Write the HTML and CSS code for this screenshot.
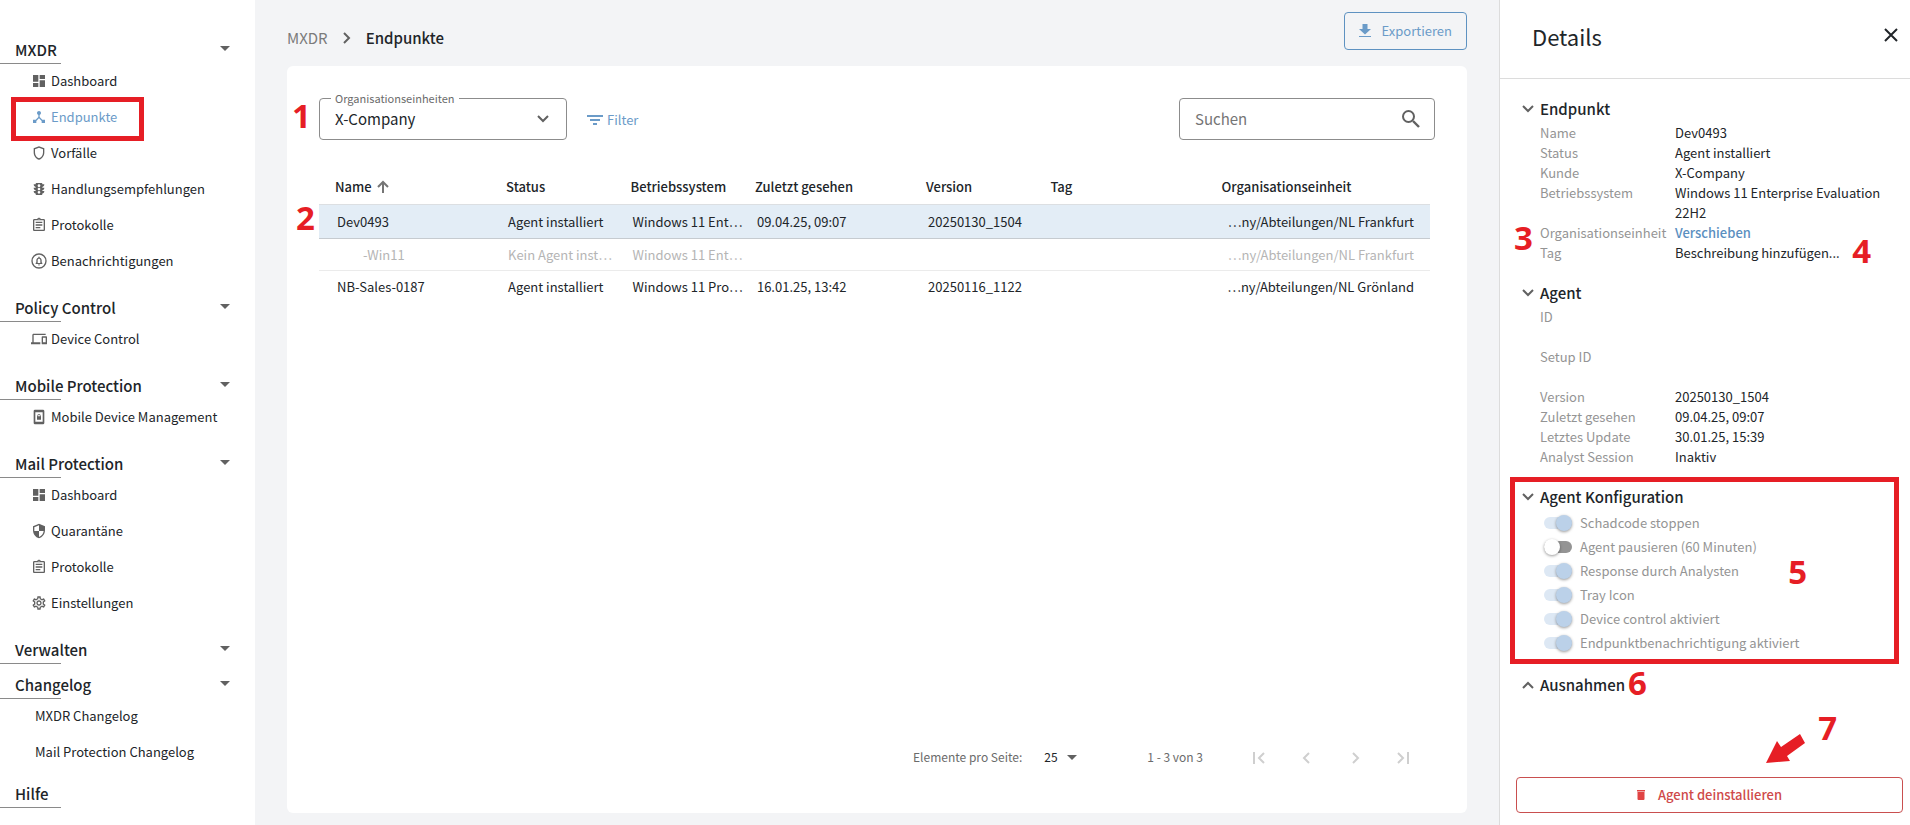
FILE: index.html
```html
<!DOCTYPE html>
<html lang="de">
<head>
    <meta charset="utf-8">
    <title>Endpunkte</title>
    <link rel="stylesheet" href="styles.css">
</head>

<body>

    <svg class="sprite" aria-hidden="true">
        <symbol id="dashboard" viewBox="0 0 24 24"><path d="M3 13h8V3H3v10zm0 8h8v-6H3v6zm10 0h8V11h-8v10zm0-18v6h8V3h-8z"/></symbol>
        <symbol id="hub" viewBox="0 0 24 24"><path d="M17 16l-4-4V8.82C14.16 8.4 15 7.3 15 6c0-1.66-1.34-3-3-3S9 4.34 9 6c0 1.3.84 2.4 2 2.82V12l-4 4H3v5h5v-3.05l4-4.2 4 4.2V21h5v-5h-4z"/></symbol>
        <symbol id="shield" viewBox="0 0 24 24"><path d="M12 2 4 5v6.09c0 5.05 3.41 9.76 8 10.91 4.59-1.15 8-5.86 8-10.91V5l-8-3zm6 9.09c0 4-2.55 7.7-6 8.83-3.45-1.13-6-4.82-6-8.83v-4.7l6-2.25 6 2.25v4.7z"/></symbol>
        <symbol id="traffic" viewBox="0 0 24 24"><path d="M20 10h-3V8.86c1.72-.45 3-2 3-3.86h-3V4c0-.55-.45-1-1-1H8c-.55 0-1 .45-1 1v1H4c0 1.86 1.28 3.41 3 3.86V10H4c0 1.86 1.28 3.41 3 3.86V15H4c0 1.86 1.28 3.41 3 3.86V20c0 .55.45 1 1 1h8c.55 0 1-.45 1-1v-1.14c1.72-.45 3-2 3-3.86h-3v-1.14c1.72-.45 3-2 3-3.86zm-8 9c-1.11 0-2-.9-2-2s.89-2 2-2c1.1 0 2 .9 2 2s-.89 2-2 2zm0-5c-1.11 0-2-.9-2-2s.89-2 2-2 2 .9 2 2-.89 2-2 2zm0-5c-1.11 0-2-.9-2-2 0-1.11.89-2 2-2 1.1 0 2 .89 2 2 0 1.1-.89 2-2 2z"/></symbol>
        <symbol id="assignment" viewBox="0 0 24 24"><path d="M7 15h7v2H7zm0-4h10v2H7zm0-4h10v2H7zm12-4h-4.18C14.4 1.84 13.3 1 12 1s-2.4.84-2.82 2H5c-1.1 0-2 .9-2 2v14c0 1.1.9 2 2 2h14c1.1 0 2-.9 2-2V5c0-1.1-.9-2-2-2zm-7-.25c.41 0 .75.34.75.75s-.34.75-.75.75-.75-.34-.75-.75.34-.75.75-.75zM19 19H5V5h14v14z"/></symbol>
        <symbol id="bell" viewBox="0 0 24 24"><circle cx="12" cy="12" r="10.500" fill="none" stroke="currentColor" stroke-width="2"/><path fill-rule="evenodd" d="M7 15v1.500h10V15l-1-1v-3c0-2-1-3.600-3-4V5.500h-2V7c-2 .4-3 2-3 4v3zm3 0v-4c0-1.500.8-2.300 2-2.300s2 .8 2 2.300v4zM10.500 17.300h3a1.500 1.500 0 0 1-3 0z"/></symbol>
        <symbol id="devices" viewBox="0 0 24 24"><path d="M4 6h18V4H4c-1.1 0-2 .9-2 2v11H0v3h14v-3H4V6zm19 2h-6c-.55 0-1 .45-1 1v10c0 .55.45 1 1 1h6c.55 0 1-.45 1-1V9c0-.55-.45-1-1-1zm-1 9h-4v-7h4v7z"/></symbol>
        <symbol id="phonelock" viewBox="0 0 24 24"><path fill-rule="evenodd" d="M6 1h12a2 2 0 0 1 2 2v18a2 2 0 0 1-2 2H6a2 2 0 0 1-2-2V3a2 2 0 0 1 2-2zm.500 4v14h11V5zM9 11h.5v-1a2.500 2.500 0 0 1 5 0v1h.5v5H9zm1.700 0h2.600v-1a1.300 1.300 0 0 0-2.600 0z"/></symbol>
        <symbol id="security" viewBox="0 0 24 24"><path d="M12 1L3 5v6c0 5.55 3.84 10.74 9 12 5.16-1.26 9-6.45 9-12V5l-9-4zm0 10.99h7c-.53 4.12-3.28 7.79-7 8.940V12H5V6.3l7-3.110v8.8z"/></symbol>
        <symbol id="settings" viewBox="0 0 24 24"><path d="M19.43 12.98c.04-.32.07-.64.07-.98 0-.34-.03-.66-.07-.98l2.11-1.65c.19-.15.24-.42.12-.64l-2-3.46c-.09-.16-.26-.25-.44-.25-.06 0-.12.01-.17.03l-2.49 1c-.52-.4-1.08-.73-1.69-.98l-.38-2.65C14.46 2.18 14.25 2 14 2h-4c-.25 0-.46.18-.49.42l-.38 2.65c-.61.25-1.17.59-1.69.98l-2.49-1c-.06-.02-.12-.03-.18-.03-.17 0-.34.09-.43.25l-2 3.46c-.13.22-.07.49.12.64l2.11 1.65c-.04.32-.07.65-.07.98 0 .33.03.66.07.98l-2.11 1.65c-.19.15-.24.42-.12.64l2 3.46c.09.16.26.25.44.25.06 0 .12-.01.17-.03l2.49-1c.52.4 1.08.73 1.69.98l.38 2.65c.03.24.24.42.49.42h4c.25 0 .46-.18.49-.42l.38-2.65c.61-.25 1.17-.59 1.69-.98l2.49 1c.06.02.12.03.18.03.17 0 .34-.09.43-.25l2-3.46c.12-.22.07-.49-.12-.64l-2.11-1.65zm-1.98-1.71c.04.31.05.52.05.73 0 .21-.02.43-.05.73l-.14 1.13.89.7 1.08.84-.7 1.21-1.27-.51-1.04-.42-.9.68c-.43.32-.84.56-1.25.73l-1.06.43-.16 1.13-.2 1.35h-1.4l-.19-1.35-.16-1.13-1.06-.43c-.43-.18-.83-.41-1.23-.71l-.91-.7-1.06.43-1.27.51-.7-1.21 1.08-.84.89-.7-.14-1.13c-.03-.31-.05-.54-.05-.74s.02-.43.05-.73l.14-1.13-.89-.7-1.08-.84.7-1.21 1.27.51 1.04.42.9-.68c.43-.32.84-.56 1.25-.73l1.06-.43.16-1.13.2-1.35h1.39l.19 1.35.16 1.13 1.06.43c.43.18.83.41 1.23.71l.91.7 1.06-.43 1.27-.51.7 1.21-1.07.85-.89.7.14 1.13zM12 8c-2.21 0-4 1.79-4 4s1.79 4 4 4 4-1.79 4-4-1.79-4-4-4zm0 6c-1.1 0-2-.9-2-2s.9-2 2-2 2 .9 2 2-.9 2-2 2z"/></symbol>
        <symbol id="caret" viewBox="0 0 10 5"><path d="M0 0h10L5 5z"/></symbol>
        <symbol id="chevron" viewBox="0 0 12 8"><path d="M1 1l5 5 5-5" fill="none" stroke="currentColor" stroke-width="2"/></symbol>
    </svg>

    <div class="layout">

        <nav class="sidebar">
            <div class="nav-group">
                <button class="nav-title">MXDR <svg class="caret"><use href="#caret"/></svg></button>
                <ul class="nav-list">
                    <li><a href="#"><svg class="icon"><use href="#dashboard"/></svg>Dashboard</a></li>
                    <li class="marked"><a href="#" class="active"><svg class="icon"><use href="#hub"/></svg>Endpunkte</a></li>
                    <li><a href="#"><svg class="icon"><use href="#shield"/></svg>Vorfälle</a></li>
                    <li><a href="#"><svg class="icon"><use href="#traffic"/></svg>Handlungsempfehlungen</a></li>
                    <li><a href="#"><svg class="icon"><use href="#assignment"/></svg>Protokolle</a></li>
                    <li><a href="#"><svg class="icon"><use href="#bell"/></svg>Benachrichtigungen</a></li>
                </ul>
            </div>
            <div class="nav-group">
                <button class="nav-title">Policy Control <svg class="caret"><use href="#caret"/></svg></button>
                <ul class="nav-list">
                    <li><a href="#"><svg class="icon"><use href="#devices"/></svg>Device Control</a></li>
                </ul>
            </div>
            <div class="nav-group">
                <button class="nav-title">Mobile Protection <svg class="caret"><use href="#caret"/></svg></button>
                <ul class="nav-list">
                    <li><a href="#"><svg class="icon"><use href="#phonelock"/></svg>Mobile Device Management</a></li>
                </ul>
            </div>
            <div class="nav-group">
                <button class="nav-title">Mail Protection <svg class="caret"><use href="#caret"/></svg></button>
                <ul class="nav-list">
                    <li><a href="#"><svg class="icon"><use href="#dashboard"/></svg>Dashboard</a></li>
                    <li><a href="#"><svg class="icon"><use href="#security"/></svg>Quarantäne</a></li>
                    <li><a href="#"><svg class="icon"><use href="#assignment"/></svg>Protokolle</a></li>
                    <li><a href="#"><svg class="icon"><use href="#settings"/></svg>Einstellungen</a></li>
                </ul>
            </div>
            <div class="nav-group">
                <button class="nav-title">Verwalten <svg class="caret"><use href="#caret"/></svg></button>
            </div>
            <div class="nav-group">
                <button class="nav-title">Changelog <svg class="caret"><use href="#caret"/></svg></button>
                <ul class="nav-list plain">
                    <li><a href="#">MXDR Changelog</a></li>
                    <li><a href="#">Mail Protection Changelog</a></li>
                </ul>
            </div>
            <div class="nav-group">
                <button class="nav-title">Hilfe</button>
            </div>
        </nav>

        <main class="main">
            <div class="topbar">
                <div class="breadcrumb">
                    <a href="#">MXDR</a>
                    <svg class="crumb-arrow" viewBox="0 0 8 12"><path d="M1 1l5 5-5 5" fill="none" stroke="currentColor" stroke-width="2"/></svg>
                    <b>Endpunkte</b>
                </div>
                <button class="export">
                    <svg viewBox="0 0 12 14"><path d="M3.500 0h5v5H12L6 10.500 0 5h3.500zM0 12h12v1H0z"/></svg>
                    Exportieren
                </button>
            </div>

            <div class="card">
                <div class="toolbar">
                    <div class="field org">
                        <label for="org">Organisationseinheiten</label>
                        <select id="org"><option>X-Company</option></select>
                        <svg class="chevron"><use href="#chevron"/></svg>
                        <span class="mark mark-1">1</span>
                    </div>
                    <button class="filter">
                        <svg viewBox="0 0 16 10"><path d="M0 0h16v2H0zM3 4h10v2H3zM6 8h4v2H6z"/></svg>
                        Filter
                    </button>
                    <div class="field search">
                        <input type="text" placeholder="Suchen" aria-label="Suchen">
                        <svg viewBox="0 0 18 18"><circle cx="6.500" cy="6.500" r="5.500" fill="none" stroke="currentColor" stroke-width="2"/><path d="M11 11l6 6" stroke="currentColor" stroke-width="2.400"/></svg>
                    </div>
                </div>

                <div class="table-wrap">
                    <span class="mark mark-2">2</span>
                    <table>
                        <colgroup>
                            <col class="c-wide"><col class="c-small"><col class="c-small"><col class="c-wide"><col class="c-small"><col class="c-wide"><col>
                        </colgroup>
                        <thead>
                            <tr>
                                <th>Name <svg class="sort" viewBox="0 0 12 13"><path d="M6 13V2M1 7l5-5 5 5" fill="none" stroke="currentColor" stroke-width="2"/></svg></th>
                                <th>Status</th>
                                <th>Betriebssystem</th>
                                <th>Zuletzt gesehen</th>
                                <th>Version</th>
                                <th>Tag</th>
                                <th>Organisationseinheit</th>
                            </tr>
                        </thead>
                        <tbody>
                            <tr class="selected">
                                <td>Dev0493</td>
                                <td>Agent installiert</td>
                                <td>Windows 11 Ent…</td>
                                <td>09.04.25, 09:07</td>
                                <td>20250130_1504</td>
                                <td></td>
                                <td class="unit">…ny/Abteilungen/NL Frankfurt</td>
                            </tr>
                            <tr class="muted">
                                <td class="child">-Win11</td>
                                <td>Kein Agent inst…</td>
                                <td>Windows 11 Ent…</td>
                                <td></td>
                                <td></td>
                                <td></td>
                                <td class="unit">…ny/Abteilungen/NL Frankfurt</td>
                            </tr>
                            <tr>
                                <td>NB-Sales-0187</td>
                                <td>Agent installiert</td>
                                <td>Windows 11 Pro…</td>
                                <td>16.01.25, 13:42</td>
                                <td>20250116_1122</td>
                                <td></td>
                                <td class="unit">…ny/Abteilungen/NL Grönland</td>
                            </tr>
                        </tbody>
                    </table>
                </div>

                <div class="paginator">
                    <label for="size">Elemente pro Seite:</label>
                    <div class="page-size">
                        <select id="size"><option>25</option></select>
                        <svg class="caret"><use href="#caret"/></svg>
                    </div>
                    <span class="range">1 - 3 von 3</span>
                    <button disabled aria-label="Erste Seite"><svg viewBox="0 0 12 12"><path d="M1 0v12M11 1L6 6l5 5"/></svg></button>
                    <button disabled aria-label="Vorherige Seite"><svg viewBox="0 0 12 12"><path d="M8 1L3 6l5 5"/></svg></button>
                    <button disabled aria-label="Nächste Seite"><svg viewBox="0 0 12 12"><path d="M4 1l5 5-5 5"/></svg></button>
                    <button disabled aria-label="Letzte Seite"><svg viewBox="0 0 12 12"><path d="M1 1l5 5-5 5M11 0v12"/></svg></button>
                </div>
            </div>
        </main>

        <aside class="details">
            <header>
                <h1>Details</h1>
                <button class="close" aria-label="Schließen"><svg viewBox="0 0 14 14"><path d="M1 1l12 12M13 1L1 13" stroke="currentColor" stroke-width="2"/></svg></button>
            </header>

            <section>
                <h2><svg class="chevron"><use href="#chevron"/></svg>Endpunkt</h2>
                <dl>
                    <dt>Name</dt><dd>Dev0493</dd>
                    <dt>Status</dt><dd>Agent installiert</dd>
                    <dt>Kunde</dt><dd>X-Company</dd>
                    <dt>Betriebssystem</dt><dd>Windows 11 Enterprise Evaluation 22H2</dd>
                    <dt>Organisationseinheit</dt><dd><a href="#">Verschieben</a></dd>
                    <dt>Tag</dt><dd>Beschreibung hinzufügen...</dd>
                </dl>
                <span class="mark mark-3">3</span>
                <span class="mark mark-4">4</span>
            </section>

            <section>
                <h2><svg class="chevron"><use href="#chevron"/></svg>Agent</h2>
                <dl>
                    <dt class="tall">ID</dt><dd></dd>
                    <dt class="tall">Setup ID</dt><dd></dd>
                    <dt>Version</dt><dd>20250130_1504</dd>
                    <dt>Zuletzt gesehen</dt><dd>09.04.25, 09:07</dd>
                    <dt>Letztes Update</dt><dd>30.01.25, 15:39</dd>
                    <dt>Analyst Session</dt><dd>Inaktiv</dd>
                </dl>
            </section>

            <section class="config">
                <h2><svg class="chevron"><use href="#chevron"/></svg>Agent Konfiguration</h2>
                <label><input type="checkbox" checked disabled>Schadcode stoppen</label>
                <label><input type="checkbox" disabled>Agent pausieren (60 Minuten)</label>
                <label><input type="checkbox" checked disabled>Response durch Analysten</label>
                <label><input type="checkbox" checked disabled>Tray Icon</label>
                <label><input type="checkbox" checked disabled>Device control aktiviert</label>
                <label><input type="checkbox" checked disabled>Endpunktbenachrichtigung aktiviert</label>
                <span class="mark mark-5">5</span>
            </section>

            <section>
                <h2><svg class="chevron up"><use href="#chevron"/></svg>Ausnahmen</h2>
                <span class="mark mark-6">6</span>
            </section>

            <div class="footer">
                <button class="uninstall">
                    <svg viewBox="0 0 8 10"><path d="M0 0h8v1.500H0zM.5 2h7v7a1 1 0 0 1-1 1h-5a1 1 0 0 1-1-1z"/></svg>
                    Agent deinstallieren
                </button>
                <svg class="arrow" viewBox="0 0 39 29"><path d="M0 29L11 7l4 6L34 0l5 9-18 13 3 5z"/></svg>
                <span class="mark mark-7">7</span>
            </div>
        </aside>

    </div>

</body>
</html>
```
FILE: styles.css
```css
*, *::before, *::after {
    box-sizing: border-box;
}

body {
    margin: 0;
    font-family: "Noto Sans CJK SC", "Noto Sans", sans-serif;
    font-size: 13px;
    line-height: 20px;
    color: #212529;
    background-color: #fff;
}

button, input, select {
    font: inherit;
    color: inherit;
    background: none;
    border: none;
    margin: 0;
    padding: 0;
}

button {
    cursor: pointer;
}

select {
    appearance: none;
}

a {
    color: inherit;
    text-decoration: none;
}

svg {
    fill: currentColor;
    flex: none;
}

.sprite {
    display: none;
}

.layout {
    display: flex;
    min-height: 100vh;
}

/* sidebar */
.sidebar {
    width: 255px;
    flex: none;
    padding-top: 30px;
}

.nav-group {
    margin-bottom: 1px;
}

.nav-title {
    display: flex;
    align-items: center;
    justify-content: space-between;
    width: 100%;
    height: 34px;
    padding: 6px 25px 0 15px;
    font-size: 15px;
    font-weight: 500;
    background: linear-gradient(#8a8a8a, #8a8a8a) 0 100% / 61px 1px no-repeat;
}

.caret {
    width: 10px;
    height: 5px;
    color: #616161;
}

.nav-title .caret {
    margin-bottom: 4px;
}

.nav-list {
    list-style: none;
    margin: -1px 0 0;
    padding: 0 0 8px;
}

.nav-list.plain {
    padding: 0 0 3px 4px;
}

.nav-list a {
    display: flex;
    align-items: center;
    gap: 4px;
    height: 36px;
    padding-left: 31px;
}

.icon {
    width: 16px;
    height: 16px;
    color: #616161;
}

.nav-list .active, .active .icon {
    color: #6b9bc8;
}

/* main area */
.main {
    flex: 1;
    display: flex;
    flex-direction: column;
    gap: 16px;
    min-width: 0;
    padding: 12px 32px;
    background-color: #f3f4f6;
}

.topbar {
    display: flex;
    justify-content: space-between;
    align-items: flex-end;
}

.breadcrumb {
    display: flex;
    align-items: center;
    gap: 15px;
    height: 24px;
    font-size: 15px;
}

.breadcrumb a {
    color: #7b7b7b;
}

.breadcrumb b {
    font-weight: 500;
}

.crumb-arrow {
    width: 8px;
    height: 12px;
    color: #616161;
}

.export {
    display: flex;
    align-items: center;
    gap: 11px;
    height: 38px;
    padding: 0 14px;
    border: 1px solid #5e92c1;
    border-radius: 4px;
    color: #6b9bc8;
}

.export svg {
    width: 12px;
    height: 14px;
}

.card {
    flex: 1;
    display: flex;
    flex-direction: column;
    padding: 32px 32px 28px;
    border-radius: 6px;
    background-color: #fff;
}

.toolbar {
    display: flex;
    align-items: center;
    gap: 20px;
}

.field {
    position: relative;
    display: flex;
    align-items: center;
    height: 42px;
    border: 1px solid #8c8c8c;
    border-radius: 4px;
    font-size: 15px;
}

.field select, .field input {
    width: 100%;
    height: 100%;
    padding: 0 48px 1px 15px;
}

.field svg {
    position: absolute;
    right: 17px;
    color: #616161;
}

.org {
    width: 248px;
}

.org label {
    position: absolute;
    top: -11px;
    left: 11px;
    padding: 0 4px;
    font-size: 11px;
    color: #6b6b6b;
    background-color: #fff;
}

.chevron {
    width: 12px;
    height: 8px;
    color: #616161;
}

.search {
    width: 256px;
    margin-left: auto;
}

.search input::placeholder {
    color: #757575;
    opacity: 1;
}

.search svg {
    right: 14px;
    width: 18px;
    height: 18px;
}

.filter {
    display: flex;
    align-items: center;
    gap: 4px;
    padding-top: 2px;
    color: #6b9bc8;
}

.filter svg {
    width: 16px;
    height: 10px;
}

/* table */
.table-wrap {
    position: relative;
    padding: 30px 5px 0 0;
}

table {
    width: 100%;
    table-layout: fixed;
    border-collapse: collapse;
}

.c-wide {
    width: 15.4%;
}

.c-small {
    width: 11.2%;
}

th {
    height: 34px;
    padding: 0 0 0 16px;
    text-align: left;
    font-weight: 500;
    white-space: nowrap;
    border-bottom: 1px solid #dcdfe2;
}

td {
    height: 32px;
    padding: 2px 0 0 18px;
    white-space: nowrap;
}

td.child {
    padding-left: 44px;
}

td.unit {
    padding-right: 16px;
    text-align: right;
}

.sort {
    width: 12px;
    height: 13px;
    margin-left: 2px;
    vertical-align: -1px;
    color: #757575;
}

.selected td {
    height: 34px;
    background-color: #e3edf6;
    border-bottom: 1px solid #c6cbd0;
}

.muted td {
    color: #b5b5b5;
    border-bottom: 1px solid #ebebeb;
}

.paginator {
    display: flex;
    align-items: center;
    height: 56px;
    margin-top: auto;
    padding-right: 8px;
    justify-content: flex-end;
    font-size: 12px;
    color: #6b6b6b;
}

.page-size {
    display: flex;
    align-items: center;
    gap: 9px;
    margin: 0 70px 0 22px;
    color: #212529;
}

.range {
    margin-right: 32px;
}

.paginator button {
    width: 48px;
    height: 48px;
    padding-top: 4px;
}

.paginator button svg {
    width: 12px;
    height: 12px;
    fill: none;
    stroke: #cfcfcf;
    stroke-width: 2;
}

/* details panel */
.details {
    display: flex;
    flex-direction: column;
    width: 411px;
    flex: none;
    border-left: 1px solid #dcdcdc;
}

.details header {
    display: flex;
    align-items: center;
    justify-content: space-between;
    height: 79px;
    margin-bottom: 16px;
    padding: 0 12px 6px 32px;
    border-bottom: 1px solid #dcdcdc;
}

h1 {
    margin: 0;
    font-size: 22px;
    font-weight: 400;
}

.close {
    display: flex;
    padding-bottom: 3px;
}

.close svg {
    width: 14px;
    height: 14px;
}

.details section {
    position: relative;
    margin-bottom: 16px;
    padding: 0 24px 0 40px;
}

h2 {
    display: flex;
    align-items: center;
    gap: 6px;
    height: 28px;
    margin: 0 0 0 -18px;
    font-size: 15px;
    font-weight: 500;
}

.up {
    transform: rotate(180deg);
}

dl {
    display: grid;
    grid-template-columns: 135px 1fr;
    margin: 0;
}

dt {
    color: #949494;
}

dt.tall {
    height: 40px;
}

dd {
    margin: 0;
}

dd a {
    font-weight: 500;
    color: #5b8fbf;
}

.config label {
    display: flex;
    align-items: center;
    gap: 8px;
    height: 24px;
    padding-left: 4px;
    color: #949494;
}

.config input {
    appearance: none;
    display: flex;
    align-items: center;
    width: 28px;
    height: 12px;
    border-radius: 6px;
    background-color: #949494;
}

.config input::before {
    content: "";
    width: 16px;
    height: 16px;
    border-radius: 50%;
    background-color: #fff;
    box-shadow: 0 1px 3px rgba(0, 0, 0, 0.4);
}

.config input:checked {
    justify-content: flex-end;
    background-color: #dde8f4;
}

.config input:checked::before {
    background-color: #bbd1e9;
}

.footer {
    position: relative;
    margin: auto 7px 12px 16px;
}

.uninstall {
    display: flex;
    align-items: center;
    justify-content: center;
    gap: 13px;
    width: 100%;
    height: 36px;
    border: 1px solid #c94f4f;
    border-radius: 4px;
    font-weight: 500;
    color: #cf4a4a;
}

.uninstall svg {
    width: 8px;
    height: 10px;
    color: #e04343;
}

/* red marks over the page */
.marked {
    position: relative;
}

.marked::after, .config::after {
    content: "";
    position: absolute;
    border: 5px solid #e61e25;
    pointer-events: none;
}

.marked::after {
    top: -2px;
    left: 11px;
    width: 133px;
    height: 44px;
}

.config::after {
    inset: -6px 11px -9px 10px;
}

.mark {
    position: absolute;
    font-family: "Open Sans", "Noto Sans", sans-serif;
    font-size: 33px;
    font-weight: 700;
    line-height: 36px;
    color: #e61e25;
}

.mark-1 {
    top: -1px;
    left: -28px;
}

.mark-2 {
    top: 60px;
    left: -23px;
}

.mark-3 {
    top: 125px;
    left: 14px;
}

.mark-4 {
    top: 138px;
    right: 39px;
}

.mark-5 {
    top: 71px;
    right: 103px;
}

.mark-6 {
    top: -6px;
    left: 128px;
}

.mark-7 {
    top: -67px;
    right: 66px;
}

.arrow {
    position: absolute;
    top: -43px;
    right: 98px;
    width: 39px;
    height: 29px;
    color: #e61e25;
}
```
